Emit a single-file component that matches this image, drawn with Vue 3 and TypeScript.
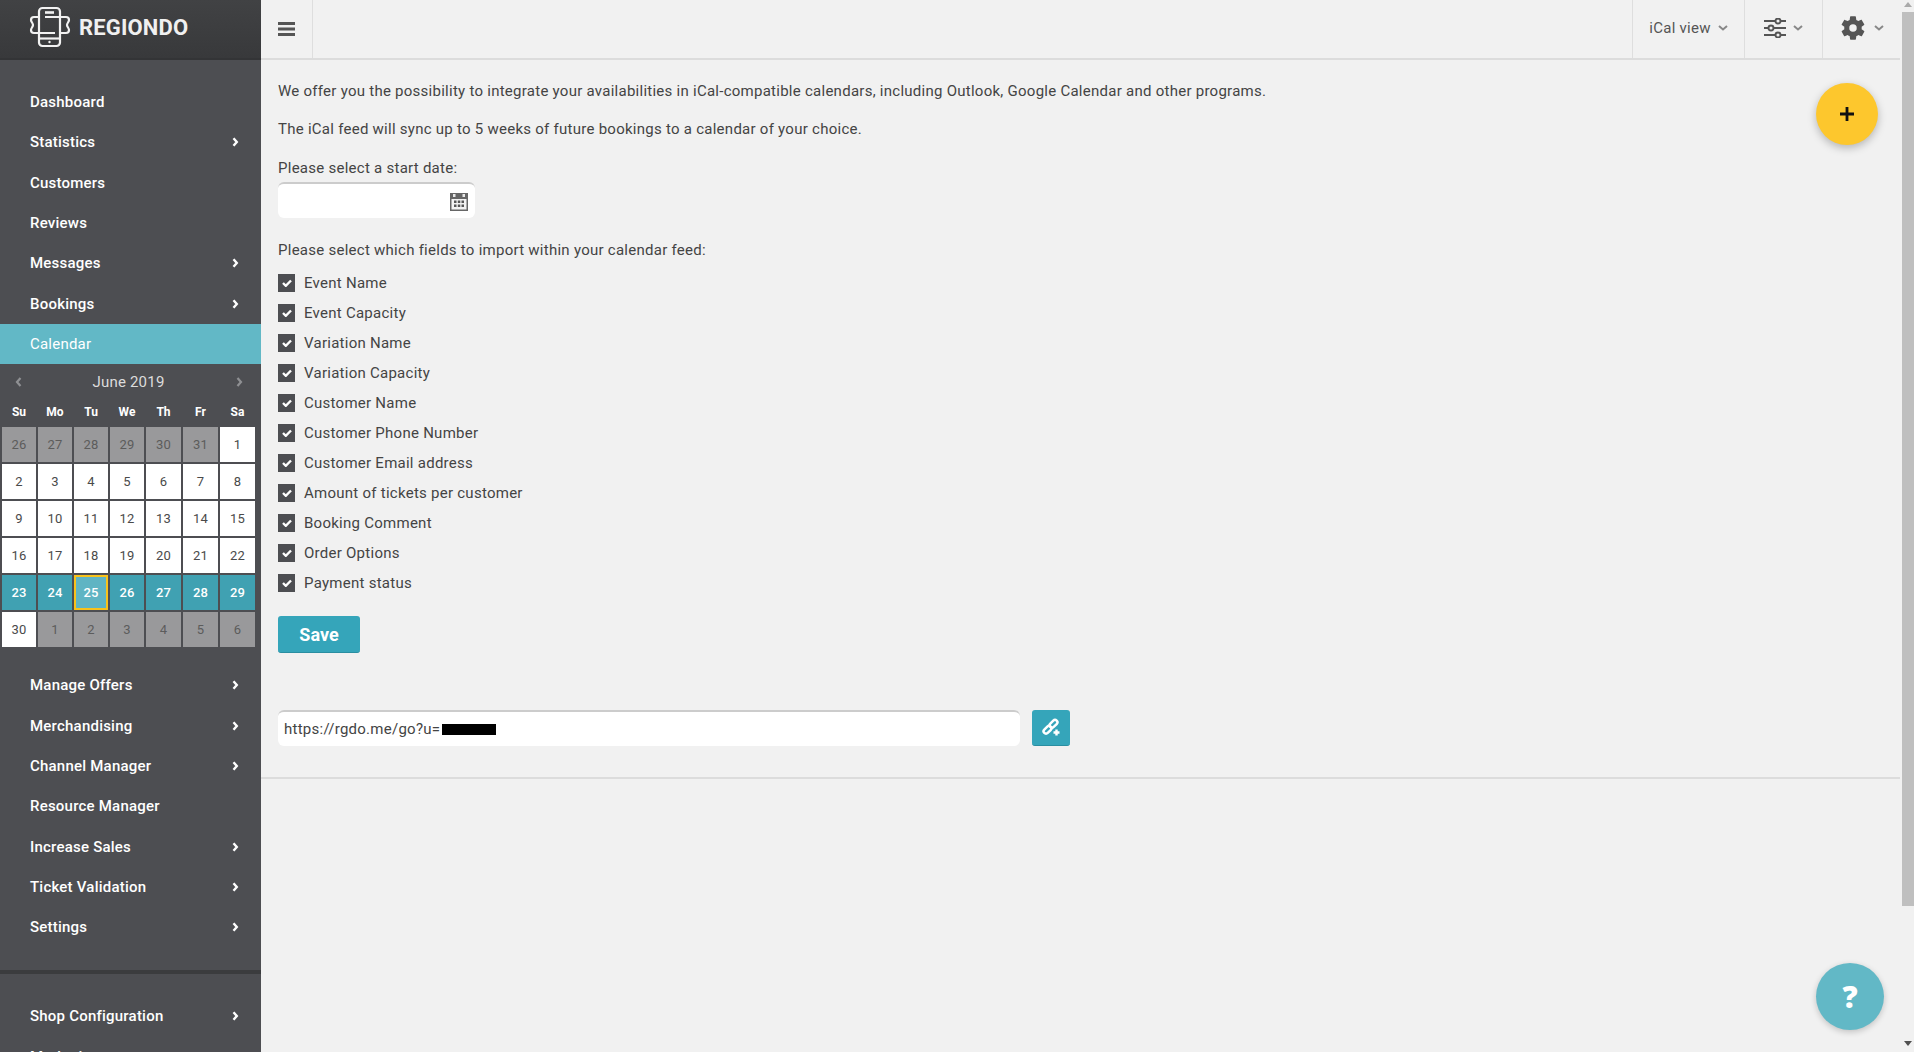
<script setup lang="ts">
interface NavItem { label: string; arrow: boolean }
const nav1: NavItem[] = [
  { label: 'Dashboard', arrow: false },
  { label: 'Statistics', arrow: true },
  { label: 'Customers', arrow: false },
  { label: 'Reviews', arrow: false },
  { label: 'Messages', arrow: true },
  { label: 'Bookings', arrow: true },
]
const nav2: NavItem[] = [
  { label: 'Manage Offers', arrow: true },
  { label: 'Merchandising', arrow: true },
  { label: 'Channel Manager', arrow: true },
  { label: 'Resource Manager', arrow: false },
  { label: 'Increase Sales', arrow: true },
  { label: 'Ticket Validation', arrow: true },
  { label: 'Settings', arrow: true },
]
const nav3: NavItem[] = [
  { label: 'Shop Configuration', arrow: true },
  { label: 'Marketing', arrow: true },
]
const weekdays = ['Su', 'Mo', 'Tu', 'We', 'Th', 'Fr', 'Sa']
interface Day { n: number; kind: string }
const days: Day[] = []
for (const n of [26, 27, 28, 29, 30, 31]) days.push({ n, kind: 'off' })
for (let n = 1; n <= 22; n++) days.push({ n, kind: '' })
for (let n = 23; n <= 29; n++) days.push({ n, kind: n === 25 ? 'today' : 'week' })
days.push({ n: 30, kind: '' })
for (let n = 1; n <= 6; n++) days.push({ n, kind: 'off' })
const fields = [
  'Event Name', 'Event Capacity', 'Variation Name', 'Variation Capacity', 'Customer Name',
  'Customer Phone Number', 'Customer Email address', 'Amount of tickets per customer',
  'Booking Comment', 'Order Options', 'Payment status',
]
</script>

<template>
  <div class="page">
    <aside class="sidebar">
      <div class="logo">
        <svg class="logo-mark" width="42" height="42" viewBox="0 0 42 42" fill="none" stroke="#f2f2f2" stroke-width="2.2">
          <rect x="10" y="2" width="21" height="38" rx="3.500" />
          <path d="M10 32.500h21" />
          <path d="M16 6.500h9" stroke-width="2.600" />
          <path d="M10 11H5a3 3 0 0 0-3 3c0 2 2 3 2 5s-2 3-2 5a3 3 0 0 0 3 3h21" />
          <path d="M16 11h21a3 3 0 0 1 3 3c0 2-2 3-2 5s2 3 2 5a3 3 0 0 1-3 3h-6" />
          <circle cx="20.500" cy="36" r="1.200" fill="#f2f2f2" stroke="none" />
        </svg>
        <span class="logo-text">REGIONDO</span>
      </div>
      <nav class="nav first">
        <a v-for="i in nav1" :key="i.label" class="nav-item">
          <span>{{ i.label }}</span>
          <svg v-if="i.arrow" class="chev" width="7" height="10" viewBox="0 0 7 10"><path d="M1.500 1.200l3.300 3.800-3.300 3.800" fill="none" stroke="#fff" stroke-width="2.400" /></svg>
        </a>
        <a class="nav-item active"><span>Calendar</span></a>
      </nav>
      <div class="cal">
        <div class="cal-head">
          <svg width="7" height="10" viewBox="0 0 7 10"><path d="M5.500 1L2 5l3.500 4" fill="none" stroke="#8f9093" stroke-width="2.200" /></svg>
          <span class="cal-title">June 2019</span>
          <svg width="7" height="10" viewBox="0 0 7 10"><path d="M1.500 1L5 5 1.500 9" fill="none" stroke="#8f9093" stroke-width="2.200" /></svg>
        </div>
        <div class="cal-week">
          <span v-for="d in weekdays" :key="d">{{ d }}</span>
        </div>
        <div class="cal-grid">
          <span v-for="(d, idx) in days" :key="idx" class="day" :class="d.kind">{{ d.n }}</span>
        </div>
      </div>
      <nav class="nav second">
        <a v-for="i in nav2" :key="i.label" class="nav-item">
          <span>{{ i.label }}</span>
          <svg v-if="i.arrow" class="chev" width="7" height="10" viewBox="0 0 7 10"><path d="M1.500 1.200l3.300 3.800-3.300 3.800" fill="none" stroke="#fff" stroke-width="2.400" /></svg>
        </a>
      </nav>
      <div class="divider"></div>
      <nav class="nav third">
        <a v-for="i in nav3" :key="i.label" class="nav-item">
          <span>{{ i.label }}</span>
          <svg v-if="i.arrow" class="chev" width="7" height="10" viewBox="0 0 7 10"><path d="M1.500 1.200l3.300 3.800-3.300 3.800" fill="none" stroke="#fff" stroke-width="2.400" /></svg>
        </a>
      </nav>
    </aside>

    <div class="main">
      <header class="topbar">
        <div class="burger-cell">
          <svg width="17" height="14" viewBox="0 0 17 14" fill="#555"><rect width="17" height="3" /><rect y="5.500" width="17" height="3" /><rect y="11" width="17" height="3" /></svg>
        </div>
        <div class="top-spacer"></div>
        <div class="top-cell ical">
          <span>iCal view</span>
          <svg class="caret" width="10" height="6" viewBox="0 0 10 6"><path d="M1 1l4 3.500L9 1" fill="none" stroke="#888" stroke-width="2" /></svg>
        </div>
        <div class="top-cell sliders">
          <svg width="22" height="20" viewBox="0 0 22 20" fill="none" stroke="#555" stroke-width="2.200">
            <path d="M0 3h11M17 3h5M0 10h4M10 10h12M0 17h11M17 17h5" />
            <circle cx="14" cy="3" r="2.500" stroke-width="1.900" />
            <circle cx="7" cy="10" r="2.500" stroke-width="1.900" />
            <circle cx="14" cy="17" r="2.500" stroke-width="1.900" />
          </svg>
          <svg class="caret" width="10" height="6" viewBox="0 0 10 6"><path d="M1 1l4 3.500L9 1" fill="none" stroke="#888" stroke-width="2" /></svg>
        </div>
        <div class="top-cell gear">
          <svg width="28" height="28" viewBox="0 0 24 24" fill="#555"><path d="M19.400 13c.04-.33.06-.66.06-1s-.02-.67-.06-1l2.100-1.650c.2-.15.25-.42.12-.64l-2-3.460c-.12-.22-.39-.3-.61-.22l-2.490 1c-.52-.4-1.080-.73-1.690-.98l-.38-2.650A.49.49 0 0 0 14 2h-4c-.25 0-.46.18-.49.42l-.38 2.650c-.61.25-1.170.59-1.690.98l-2.490-1c-.23-.09-.49 0-.61.22l-2 3.460c-.13.22-.07.49.12.64L4.570 11c-.04.33-.07.67-.07 1s.03.67.07 1l-2.110 1.650c-.19.15-.25.42-.12.64l2 3.460c.12.22.39.3.61.22l2.490-1c.52.4 1.080.73 1.690.98l.38 2.650c.03.24.24.42.49.42h4c.25 0 .46-.18.49-.42l.38-2.650c.61-.25 1.170-.59 1.690-.98l2.490 1c.23.09.49 0 .61-.22l2-3.460c.12-.22.07-.49-.12-.64L19.400 13zM12 15.200a3.200 3.200 0 1 1 0-6.400 3.200 3.200 0 0 1 0 6.400z" /></svg>
          <svg class="caret" width="10" height="6" viewBox="0 0 10 6"><path d="M1 1l4 3.500L9 1" fill="none" stroke="#888" stroke-width="2" /></svg>
        </div>
      </header>

      <main class="content">
        <p class="intro">We offer you the possibility to integrate your availabilities in iCal-compatible calendars, including Outlook, Google Calendar and other programs.</p>
        <p class="intro second-line">The iCal feed will sync up to 5 weeks of future bookings to a calendar of your choice.</p>
        <label class="lbl">Please select a start date:</label>
        <div class="date-input">
          <svg width="18" height="19" viewBox="0 0 18 19">
            <rect y="1" width="18" height="18" fill="#666" />
            <rect x="1.500" y="7" width="15" height="10.500" fill="#f2f2f2" />
            <rect x="3" y="2" width="2.500" height="3" fill="#e8e8e8" />
            <rect x="12.500" y="2" width="2.500" height="3" fill="#e8e8e8" />
            <path fill="#555" d="M4 8.500h2.500v2.500H4zM7.800 8.500h2.500v2.500H7.800zM11.500 8.500H14v2.500h-2.500zM4 12.500h2.500V15H4zM7.800 12.500h2.500V15H7.800zM11.500 12.500H14V15h-2.500z" />
          </svg>
        </div>
        <p class="lbl fields-title">Please select which fields to import within your calendar feed:</p>
        <ul class="fields">
          <li v-for="f in fields" :key="f">
            <span class="box"><svg width="10" height="8" viewBox="0 0 10 8"><path d="M1 4l2.800 2.800L9 1.500" fill="none" stroke="#fff" stroke-width="2.400" /></svg></span>
            <span>{{ f }}</span>
          </li>
        </ul>
        <button class="save" type="button">Save</button>
        <div class="url-row">
          <div class="url-input"><span>https://rgdo.me/go?u=</span><span class="redact"></span></div>
          <button class="link-btn" type="button" aria-label="link">
            <svg width="20" height="20" viewBox="0 0 20 20" fill="none" stroke="#fff" stroke-width="2.500">
              <rect x="8" y="3.400" width="9" height="4.800" rx="2.400" transform="rotate(-45 12.500 5.800)" />
              <rect x="2" y="9.400" width="9" height="4.800" rx="2.400" transform="rotate(-45 6.500 11.800)" />
              <path d="M15.500 10v9M11 14.500h9" stroke="#35a5ba" stroke-width="5" />
              <path d="M15.500 11.500v6M12.500 14.500h6" stroke-width="2.400" />
            </svg>
          </button>
        </div>
        <hr class="rule" />
      </main>

      <button class="fab" type="button" aria-label="add">
        <svg width="16" height="16" viewBox="0 0 16 16"><path d="M8 1v14M1 8h14" stroke="#111" stroke-width="2.800" /></svg>
      </button>
      <button class="help" type="button">?</button>
    </div>

    <div class="scrollbar">
      <span class="sb-up"></span>
      <span class="sb-thumb"></span>
      <span class="sb-down"></span>
    </div>
  </div>
</template>

<style>
html, body { margin: 0; height: 100%; overflow: hidden; background: #f1f1f1; }
</style>

<style scoped>
.page {
  display: flex;
  width: 1914px;
  height: 1052px;
  overflow: hidden;
  font-family: Roboto, "Liberation Sans", sans-serif;
  font-size: 15px;
  letter-spacing: 0.26px;
  color: #444;
  background: #f1f1f1;
}
.sidebar {
  flex: none;
  width: 261px;
  height: 1052px;
  overflow: hidden;
  background: #4d4e52;
  color: #fff;
}
.logo {
  height: 58px;
  display: flex;
  align-items: center;
  gap: 8px;
  padding-left: 29px;
  background: linear-gradient(#414244, #38393b);
  border-bottom: 2px solid #333436;
}
.logo-mark { flex: none; margin-top: -4px; }
.logo-text {
  font-size: 22px;
  font-weight: 700;
  letter-spacing: 0.15px;
  margin-top: -4px;
  color: #f0f0f0;
}
.nav { display: flex; flex-direction: column; }
.first { padding-top: 22px; }
.nav-item {
  height: 40.300px;
  flex: none;
  display: flex;
  align-items: center;
  justify-content: space-between;
  padding: 0 22.500px 0 30px;
  font-size: 15px;
  font-weight: 500;
  letter-spacing: 0.22px;
  color: #fff;
}
.nav-item.active { background: #62b8c6; font-weight: 400; height: 40px; }
.chev { flex: none; }
.cal { height: 301.500px; padding: 0 6px 0 2px; box-sizing: border-box; }
.cal-head {
  display: flex;
  align-items: center;
  justify-content: space-between;
  height: 36px;
  padding: 0 12.500px;
}
.cal-title { font-size: 15px; letter-spacing: 0.2px; color: #dcdcdc; }
.cal-week {
  display: grid;
  grid-template-columns: 34px 34px 34px 34px 35px 35px 35px;
  column-gap: 2px;
  height: 25px;
  padding-bottom: 2px;
  align-items: center;
  text-align: center;
  font-size: 12px;
  font-weight: 700;
  letter-spacing: 0;
  color: #fff;
}
.cal-grid {
  display: grid;
  grid-template-columns: 34px 34px 34px 34px 35px 35px 35px;
  grid-auto-rows: 35px;
  gap: 2px;
}
.day {
  display: flex;
  align-items: center;
  justify-content: center;
  font-size: 13px;
  letter-spacing: 0.2px;
  background: #fff;
  color: #4a4a4a;
}
.day.off { background: #99999b; color: #5c5c5c; }
.day.week { background: #40a1b2; color: #fff; font-weight: 500; }
.day.today {
  background: #5fb4c3;
  color: #fff;
  font-weight: 500;
  border: 2px solid #f9c21a;
}
.divider { height: 4px; margin-top: 22.400px; background: #3b3c3e; }
.third { padding-top: 22.500px; }
.main {
  position: relative;
  flex: none;
  width: 1641px;
  height: 1052px;
}
.topbar {
  display: flex;
  height: 58px;
  margin-right: 2px;
  border-bottom: 2px solid #dcdcdc;
}
.top-spacer { flex: 1; }
.burger-cell {
  width: 51px;
  display: flex;
  align-items: center;
  justify-content: center;
  border-right: 1px solid #dedede;
}
.top-cell {
  display: flex;
  align-items: center;
  justify-content: center;
  gap: 7px;
  padding-bottom: 3px;
  border-left: 1px solid #dedede;
  box-sizing: border-box;
  font-size: 15px;
  color: #555;
}
.ical { width: 112px; }
.sliders { width: 78px; }
.gear { width: 78px; }
.caret { flex: none; }
.content { padding: 0 2px 0 17px; }
.intro { margin: 0; line-height: 20px; padding-top: 21px; }
.second-line { padding-top: 18px; }
.lbl { display: block; margin: 0; line-height: 20px; }
label.lbl { padding-top: 19px; }
.date-input {
  width: 197px;
  height: 36px;
  box-sizing: border-box;
  margin-top: 4px;
  border-top: 2px solid #ccc;
  border-radius: 6px;
  background: #fff;
  display: flex;
  align-items: center;
  justify-content: flex-end;
  padding-right: 7px;
}
.fields-title { padding-top: 22px; }
.fields { list-style: none; margin: 8px 0 0; padding: 0; }
.fields li { display: flex; align-items: center; gap: 9px; height: 30px; }
.box {
  width: 17px;
  height: 18px;
  background: #4d4e52;
  display: flex;
  align-items: center;
  justify-content: center;
  flex: none;
}
.save {
  display: block;
  margin-top: 18px;
  width: 82px;
  height: 37px;
  border: 0;
  border-bottom: 1px solid #2a8ea1;
  border-radius: 3px;
  background: #35a5ba;
  color: #fff;
  font-family: inherit;
  font-size: 18px;
  font-weight: 700;
  letter-spacing: 0;
  padding: 0;
}
.url-row { display: flex; gap: 12px; margin-top: 57px; }
.url-input {
  width: 742px;
  height: 36px;
  box-sizing: border-box;
  border-top: 2px solid #ccc;
  border-radius: 6px;
  background: #fff;
  padding-left: 6px;
  display: flex;
  align-items: center;
}
.redact { width: 54px; height: 11px; background: #000; margin-left: 2px; }
.link-btn {
  width: 38px;
  height: 36px;
  border: 0;
  border-bottom: 1px solid #2a8ea1;
  border-radius: 3px;
  background: #35a5ba;
  display: flex;
  align-items: center;
  justify-content: center;
  padding: 0;
}
.rule {
  border: 0;
  height: 2px;
  background: #dcdcdc;
  margin: 31px 0 0 -17px;
}
.fab {
  position: absolute;
  left: 1555px;
  top: 83px;
  width: 62px;
  height: 62px;
  border: 0;
  border-radius: 50%;
  background: #fdc72d;
  box-shadow: 0 3px 9px rgba(0, 0, 0, 0.25);
  display: flex;
  align-items: center;
  justify-content: center;
  padding: 0;
}
.help {
  position: absolute;
  left: 1555px;
  top: 963px;
  width: 68px;
  height: 67px;
  border: 0;
  border-radius: 50%;
  background: #62b8c6;
  box-shadow: 0 2px 6px rgba(0, 0, 0, 0.2);
  color: #fff;
  font-family: "Open Sans", sans-serif;
  font-size: 30px;
  font-weight: 800;
  letter-spacing: 0;
  padding: 0;
}
.scrollbar {
  flex: none;
  width: 12px;
  height: 1052px;
  position: relative;
  background: #f1f1f1;
}
.sb-thumb { position: absolute; left: 0; top: 12px; width: 12px; height: 894px; background: #bfbfbf; }
.sb-up {
  position: absolute; left: 2px; top: 2px; width: 0; height: 0;
  border: 4px solid transparent; border-top: 0; border-bottom: 5px solid #aaa;
}
.sb-down {
  position: absolute; left: 2px; top: 1041px; width: 0; height: 0;
  border: 4px solid transparent; border-bottom: 0; border-top: 5px solid #505050;
}
</style>
